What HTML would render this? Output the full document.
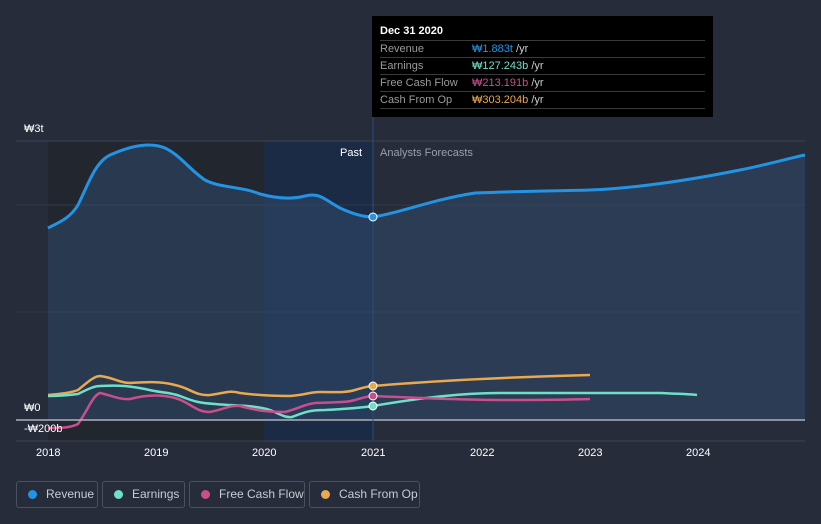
<!DOCTYPE html>
<html><head><meta charset="utf-8"><style>
body{margin:0;width:821px;height:524px;background:#262c39;font-family:"Liberation Sans",sans-serif;overflow:hidden;position:relative}
.t{position:absolute;color:#fff;font-size:11px}
.leg{position:absolute;top:481px;height:27px;border:1px solid #4a5160;border-radius:3px;color:#c9ccd2;font-size:12px;line-height:25px;box-sizing:border-box;white-space:nowrap;overflow:hidden}
.leg i{display:inline-block;width:9px;height:9px;border-radius:50%;margin:0 9px 0 11px;vertical-align:-1px}
.tip{position:absolute;left:372px;top:16px;width:341px;height:101px;background:#000;color:#fff;font-size:11px}
.tip .r{position:absolute;left:8px;width:325px;border-top:1px solid #3a3a3a;height:16px;line-height:16px;color:#9a9a9a}
.tip .r b{font-weight:normal;position:absolute;left:92px}
</style></head><body>
<svg width="821" height="524" style="position:absolute;left:0;top:0">
<rect x="48" y="141" width="216" height="300" fill="#22272f"/>
<rect x="264" y="141" width="109" height="300" fill="#1b2a45"/>
<line x1="16" y1="141" x2="805" y2="141" stroke="#3c4352"/>
<line x1="16" y1="205" x2="805" y2="205" stroke="#333a48"/>
<line x1="16" y1="312" x2="805" y2="312" stroke="#333a48"/>
<line x1="16" y1="441" x2="805" y2="441" stroke="#3c4352"/>
<path d="M48,228 C60,222 70,218 78,205 C88,185 95,162 110,155 C130,146 150,142 165,148 C180,155 190,170 205,180 C220,188 240,186 260,194 C275,198 290,200 305,196 C320,192 325,200 340,208 C355,215 365,217 373,217 C400,213 430,200 475,193 C520,191 560,191 590,190 C640,188 690,180 740,170 C770,164 790,158 805,155 L805,420 L48,420Z" fill="#2f4a6b" opacity="0.55"/>
<path d="M48,228 C60,222 70,218 78,205 C88,185 95,162 110,155 C130,146 150,142 165,148 C180,155 190,170 205,180 C220,188 240,186 260,194 C275,198 290,200 305,196 C320,192 325,200 340,208 C355,215 365,217 373,217 C400,213 430,200 475,193 C520,191 560,191 590,190 C640,188 690,180 740,170 C770,164 790,158 805,155" fill="none" stroke="#2394e3" stroke-width="3"/>
<path d="M48,395 C60,394 70,393 78,390 C90,380 95,376 100,376 C115,378 120,383 130,383 C145,382 160,381 175,385 C190,388 195,396 210,395 C225,393 230,390 240,393 C255,395 270,396 290,396 C305,395 310,392 320,392 C335,392 345,393 355,390 C365,387 370,386 373,386 C420,382 480,378 590,375" fill="none" stroke="#e8a94f" stroke-width="2.5"/>
<path d="M48,396 C60,396 70,395 78,394 C90,388 95,386 100,386 C120,385 130,386 145,389 C160,393 170,392 180,396 C195,402 200,403 215,404 C235,406 255,405 270,410 C280,414 285,418 292,417 C305,412 310,410 325,410 C345,409 360,408 373,406 C420,398 460,393 500,393 C560,393 620,393 660,393 C680,394 690,394 697,395" fill="none" stroke="#6fe0c8" stroke-width="2.5"/>
<path d="M48,428 C60,428 70,428 78,424 C88,410 93,395 100,393 C110,395 120,400 130,399 C145,395 160,394 175,398 C190,402 195,412 210,412 C225,409 230,405 240,406 C255,410 265,412 285,412 C300,408 305,404 315,403 C335,402 345,403 355,400 C365,397 370,396 373,396 C420,398 460,400 500,400 C540,400 560,400 590,399" fill="none" stroke="#c84f8c" stroke-width="2.5"/>
<line x1="16" y1="420" x2="805" y2="420" stroke="#aeb2ba" stroke-width="1.5"/>
<line x1="373" y1="110" x2="373" y2="441" stroke="#2d4d78" stroke-width="1"/>
<circle cx="373" cy="386" r="4" fill="#e8a94f" stroke="#fff"/>
<circle cx="373" cy="396" r="4" fill="#c84f8c" stroke="#fff"/>
<circle cx="373" cy="406" r="4" fill="#6fe0c8" stroke="#fff"/>
<circle cx="373" cy="217" r="4" fill="#2394e3" stroke="#fff"/>
</svg>
<div class="t" style="left:24px;top:123px">₩3t</div>
<div class="t" style="left:24px;top:402px">₩0</div>
<div class="t" style="left:24px;top:423px">-₩200b</div>
<div class="t" style="left:340px;top:147px">Past</div>
<div class="t" style="left:380px;top:147px;color:#9aa0aa">Analysts Forecasts</div>
<div class="t" style="left:36px;top:447px">2018</div>
<div class="t" style="left:144px;top:447px">2019</div>
<div class="t" style="left:252px;top:447px">2020</div>
<div class="t" style="left:361px;top:447px">2021</div>
<div class="t" style="left:470px;top:447px">2022</div>
<div class="t" style="left:578px;top:447px">2023</div>
<div class="t" style="left:686px;top:447px">2024</div>
<div class="tip">
<div style="position:absolute;left:8px;top:9px;font-weight:bold">Dec 31 2020</div>
<div class="r" style="top:24px">Revenue<b><span style="color:#2394e3">₩1.883t</span> <span style="color:#ccc">/yr</span></b></div>
<div class="r" style="top:41px">Earnings<b><span style="color:#6fe0c8">₩127.243b</span> <span style="color:#ccc">/yr</span></b></div>
<div class="r" style="top:58px">Free Cash Flow<b><span style="color:#c84f8c">₩213.191b</span> <span style="color:#ccc">/yr</span></b></div>
<div class="r" style="top:75px">Cash From Op<b><span style="color:#e8a94f">₩303.204b</span> <span style="color:#ccc">/yr</span></b></div>
<div class="r" style="top:92px;height:0"></div>
</div>
<div class="leg" style="left:16px;width:82px"><i style="background:#2394e3"></i>Revenue</div>
<div class="leg" style="left:102px;width:83px"><i style="background:#6fe0c8"></i>Earnings</div>
<div class="leg" style="left:189px;width:116px"><i style="background:#c84f8c"></i>Free Cash Flow</div>
<div class="leg" style="left:309px;width:111px"><i style="background:#e8a94f"></i>Cash From Op</div>
</body></html>
